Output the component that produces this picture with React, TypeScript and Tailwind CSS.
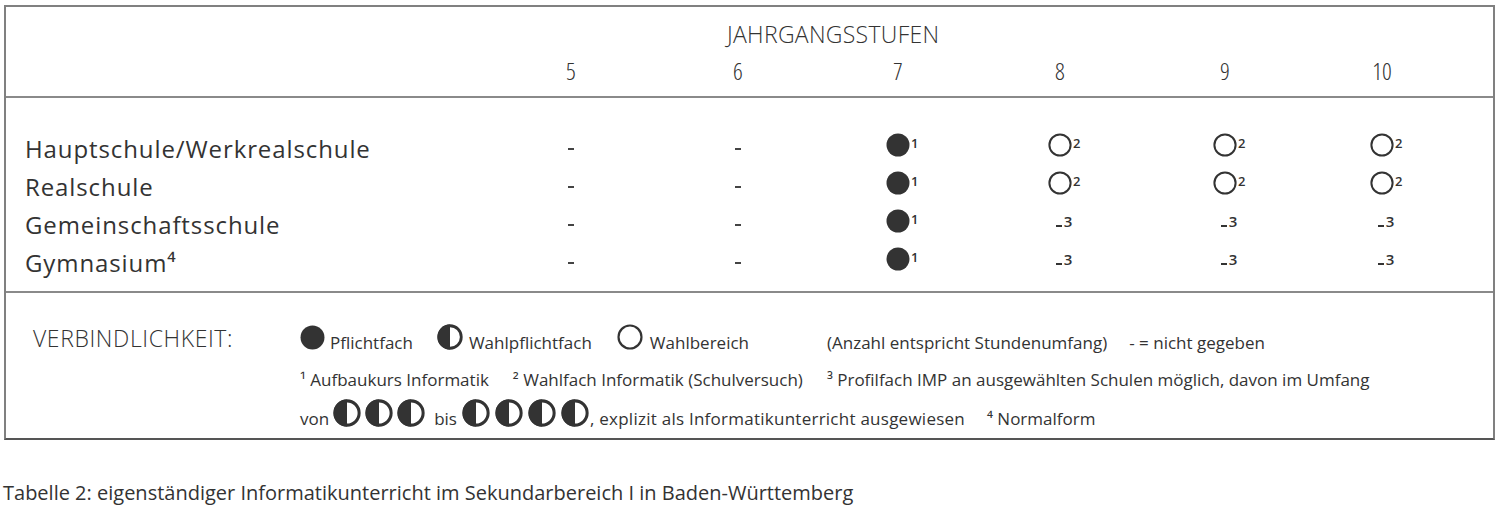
import React from "react";

const years = ["5", "6", "7", "8", "9", "10"];

type Mark = "dash" | "full" | "open" | "low";

const rows: { label: string; sup?: string; cells: Mark[] }[] = [
  { label: "Hauptschule/Werkrealschule", cells: ["dash", "dash", "full", "open", "open", "open"] },
  { label: "Realschule", cells: ["dash", "dash", "full", "open", "open", "open"] },
  { label: "Gemeinschaftsschule", cells: ["dash", "dash", "full", "low", "low", "low"] },
  { label: "Gymnasium", sup: "⁴", cells: ["dash", "dash", "full", "low", "low", "low"] },
];

const cols = "grid grid-cols-[484px_162px_172px_148px_176px_154px_160px]";

const Dot = ({ kind, size = 24 }: { kind: "full" | "half" | "open"; size?: number }) => (
  <svg width={size} height={size} viewBox="0 0 24 24" className="shrink-0">
    {kind === "full" && <circle cx="12" cy="12" r="11.5" fill="#333" />}
    {kind === "open" && <circle cx="12" cy="12" r="10.6" fill="none" stroke="#333" strokeWidth="2" />}
    {kind === "half" && (
      <>
        <circle cx="12" cy="12" r="10.4" fill="none" stroke="#333" strokeWidth="2.6" />
        <path d="M12 0.5 A11.5 11.5 0 0 0 12 23.5 Z" fill="#333" />
      </>
    )}
  </svg>
);

const Cell = ({ mark }: { mark: Mark }) => {
  if (mark === "dash") {
    return <span className="w-[6px] h-[2px] bg-[#444] translate-y-[2px]" />;
  }
  if (mark === "low") {
    return (
      <span className="flex items-end gap-[2px] ml-[8px] translate-y-[-2px]">
        <span className="w-[6px] h-[2px] bg-[#333] mb-[1px]" />
        <span className="text-[15px] font-semibold text-[#333] leading-[14px]">3</span>
      </span>
    );
  }
  return (
    <span className="relative inline-flex -translate-y-[2px]">
      <Dot kind={mark === "full" ? "full" : "open"} />
      <span className="absolute left-[25px] top-[4px] text-[13px] font-semibold text-[#333] leading-none">
        {mark === "full" ? "1" : "2"}
      </span>
    </span>
  );
};

const App = () => {
  return (
    <div
      className="pt-[5px] pl-[4px] bg-white text-[#333]"
      style={{ fontFamily: '"Open Sans", "Noto Sans", sans-serif' }}
    >
      <div className="w-[1491px] border-2 border-[#808080] border-b-[#555]">
        <div className="h-[91px] border-b-2 border-[#8a8a8a]">
          <div className="pt-[12px] pl-[721px] text-[23px] font-light tracking-[0.3px] leading-[30px]">
            JAHRGANGSSTUFEN
          </div>
          <div className={`${cols} mt-[8px]`}>
            <div />
            {years.map((y) => (
              <div key={y} className="text-center text-[24px] font-light leading-[28px] [font-stretch:condensed]">
                {y}
              </div>
            ))}
          </div>
        </div>

        <div className="pt-[30px] pb-[11px] border-b-2 border-[#8a8a8a]">
          {rows.map((r) => (
            <div key={r.label} className={`${cols} h-[38px] items-center`}>
              <div className="pl-[19px] text-[24px] leading-none pt-[3px] tracking-[0.9px]">
                {r.label}
                {r.sup}
              </div>
              {r.cells.map((c, i) => (
                <div key={i} className="flex justify-center items-center">
                  <Cell mark={c} />
                </div>
              ))}
            </div>
          ))}
        </div>

        <div className="grid grid-cols-[294px_1fr] pt-[21px] pb-[10px] text-[17px]">
          <div className="pl-[27px] pt-[9px] text-[23px] font-light tracking-[0.6px] leading-[30px]">
            VERBINDLICHKEIT:
          </div>
          <div className="flex flex-col">
            <div className="flex items-end h-[36px]">
              <Dot kind="full" size={25} />
              <span className="ml-[5px] mr-[24px] leading-[18px] -mb-[2px]">Pflichtfach</span>
              <Dot kind="half" size={26} />
              <span className="ml-[6px] mr-[25px] leading-[18px] -mb-[2px]">Wahlpflichtfach</span>
              <Dot kind="open" size={26} />
              <span className="ml-[7px] leading-[18px] -mb-[2px]">Wahlbereich</span>
              <span className="ml-[78px] leading-[18px] -mb-[2px]">(Anzahl entspricht Stundenumfang)</span>
              <span className="ml-[22px] leading-[18px] -mb-[2px]">- = nicht gegeben</span>
            </div>
            <div className="flex h-[44px] items-center pt-[15px] gap-[24px]">
              <span>¹ Aufbaukurs Informatik</span>
              <span>² Wahlfach Informatik (Schulversuch)</span>
              <span>³ Profilfach IMP an ausgewählten Schulen möglich, davon im Umfang</span>
            </div>
            <div className="flex items-end h-[34px]">
              <span className="leading-[18px] mr-[4px]">von</span>
              <span className="flex gap-[4px] mb-[1px]">
                <Dot kind="half" size={28} />
                <Dot kind="half" size={28} />
                <Dot kind="half" size={28} />
              </span>
              <span className="leading-[18px] ml-[9px] mr-[5px]">bis</span>
              <span className="flex gap-[5px] mb-[1px]">
                <Dot kind="half" size={28} />
                <Dot kind="half" size={28} />
                <Dot kind="half" size={28} />
                <Dot kind="half" size={28} />
              </span>
              <span className="leading-[18px] ml-[1px] tracking-[0.25px]">, explizit als Informatikunterricht ausgewiesen</span>
              <span className="leading-[18px] ml-[22px]">⁴ Normalform</span>
            </div>
          </div>
        </div>
      </div>

      <div className="mt-[40px] -ml-[1px] text-[20px] leading-[26px]">
        Tabelle 2: eigenständiger Informatikunterricht im Sekundarbereich I in Baden-Württemberg
      </div>
    </div>
  );
};

export default App;
